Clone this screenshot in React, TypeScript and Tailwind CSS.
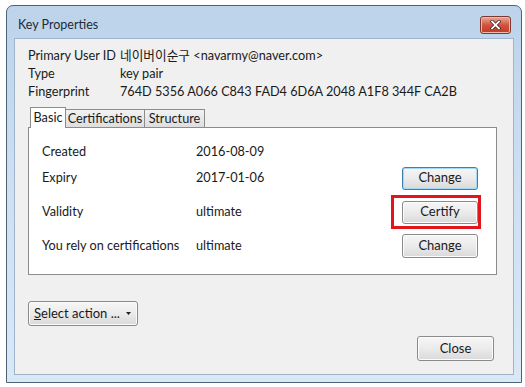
import React from "react";

const font = { fontFamily: 'Lato, "Noto Sans CJK KR", sans-serif' };

function WinButton({
  children,
  focused,
  className = "",
}: {
  children: React.ReactNode;
  focused?: boolean;
  className?: string;
}) {
  return (
    <button
      className={
        "flex items-center justify-center whitespace-nowrap rounded-[3px] border text-[13px] text-[#1a1a1a] bg-gradient-to-b from-[#f6f6f6] via-[#ebebeb] to-[#d9d9d9] " +
        (focused
          ? "border-[#3c7fb1] shadow-[inset_0_0_0_1px_#a6d8f5] "
          : "border-[#8a8a8a] shadow-[inset_0_0_0_1px_#fcfcfc] ") +
        className
      }
    >
      {children}
    </button>
  );
}

function InfoRow({ label, value }: { label: string; value: string }) {
  return (
    <div className="flex h-[18px] items-center whitespace-nowrap">
      <span className="w-[92px] shrink-0">{label}</span>
      <span>{value}</span>
    </div>
  );
}

function PanelRow({
  label,
  value,
  children,
  className = "",
}: {
  label: string;
  value: string;
  children?: React.ReactNode;
  className?: string;
}) {
  return (
    <div className={"flex h-[24px] items-center whitespace-nowrap " + className}>
      <span className="w-[154px] shrink-0">{label}</span>
      <span className="flex-1">{value}</span>
      <div className="mr-[18px] w-[76px]">{children}</div>
    </div>
  );
}

export default function App() {
  return (
    <div className="h-[387px] w-[525px] overflow-hidden bg-white pl-[6px] pt-[5px]" style={font}>
      <div className="flex h-[378px] w-[516px] flex-col rounded-t-[7px] border border-[#4d6378] bg-gradient-to-b from-[#bcd3ea] via-[#cfe0f2] to-[#dae8f6]">
        {/* title bar */}
        <div className="flex h-[32px] shrink-0 items-center justify-between pl-[11px] pr-[10px] pt-[6px]">
          <span className="text-[12.5px] text-[#1e2a36]">Key Properties</span>
          <div className="flex h-[18px] w-[31px] items-center justify-center rounded-[3px] border border-[#7a3a32] bg-gradient-to-b from-[#e9a99c] via-[#d2523f] to-[#c43a26] shadow-[inset_0_0_0_1px_#f0b8ad]">
            <svg width="11" height="10" viewBox="0 0 11 10">
              <path d="M2 1.5 L9 8.5 M9 1.5 L2 8.5" stroke="#3a1a14" strokeWidth="3.2" strokeLinecap="square" />
              <path d="M2 1.5 L9 8.5 M9 1.5 L2 8.5" stroke="#ffffff" strokeWidth="1.8" strokeLinecap="square" />
            </svg>
          </div>
        </div>

        {/* client area */}
        <div className="mx-[7px] mb-[7px] flex flex-1 flex-col border border-[#9eb4cc] bg-[#f0f0f0] px-[13px] pt-[8px] text-[12.7px] text-[#1a1a1a]">
          <InfoRow label="Primary User ID" value="네이버이순구 <navarmy@naver.com>" />
          <InfoRow label="Type" value="key pair" />
          <InfoRow label="Fingerprint" value="764D 5356 A066 C843 FAD4 6D6A 2048 A1F8 344F CA2B" />

          {/* tabs */}
          <div className="mt-[6px] flex h-[20px] items-end pl-[2px]">
            <div className="relative z-10 -mb-px flex h-[21px] w-[36px] items-center justify-center border border-b-0 border-[#8c8c8c] bg-white">
              Basic
            </div>
            <div className="flex h-[18px] w-[79px] items-center justify-center border border-b-0 border-l-0 border-[#8c8c8c] bg-gradient-to-b from-[#f2f2f2] to-[#dedede]">
              Certifications
            </div>
            <div className="flex h-[18px] w-[60px] items-center justify-center border border-b-0 border-l-0 border-[#8c8c8c] bg-gradient-to-b from-[#f2f2f2] to-[#dedede]">
              Structure
            </div>
          </div>

          {/* panel */}
          <div className="h-[148px] w-[469px] border border-[#8c8c8c] bg-white pl-[13px] pt-[12px]">
            <PanelRow label="Created" value="2016-08-09" />
            <PanelRow label="Expiry" value="2017-01-06" className="mt-[2px]">
              <WinButton focused className="h-[23px] w-[76px]">
                Change
              </WinButton>
            </PanelRow>
            <PanelRow label="Validity" value="ultimate" className="mt-[10px]">
              <div className="relative">
                <WinButton className="h-[23px] w-[76px]">Certify</WinButton>
                <div className="pointer-events-none absolute left-[-11px] top-[-6px] h-[34px] w-[90px] border-[3px] border-[#e3141c]" />
              </div>
            </PanelRow>
            <PanelRow label="You rely on certifications" value="ultimate" className="mt-[10px]">
              <WinButton className="h-[24px] w-[76px]">Change</WinButton>
            </PanelRow>
          </div>

          {/* bottom */}
          <WinButton className="mt-[26px] h-[25px] w-[110px] !justify-start pl-[5px]">
            <span>
              <span className="underline">S</span>elect action ...
            </span>
            <svg className="ml-[6px]" width="5" height="3" viewBox="0 0 5 3">
              <path d="M0 0 H5 L2.5 3 Z" fill="#222" />
            </svg>
          </WinButton>
          <div className="mt-[10px] flex justify-end pr-[6px]">
            <WinButton className="h-[25px] w-[77px]">Close</WinButton>
          </div>
        </div>
      </div>
    </div>
  );
}
